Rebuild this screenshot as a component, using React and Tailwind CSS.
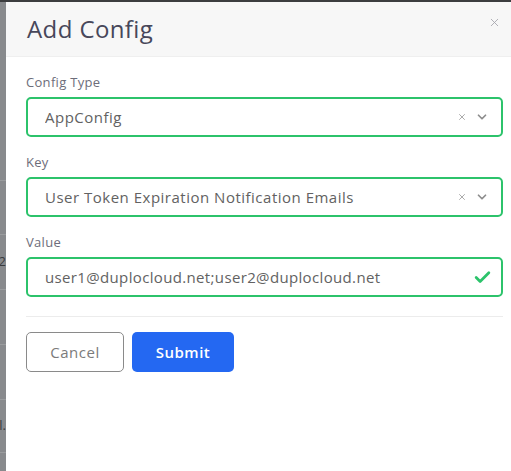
import { X, ChevronDown, Check } from "lucide-react";

function Field({ label, children }) {
  return (
    <div className="flex flex-col">
      <label className="text-[13px] leading-[20px] mb-[5px] text-[#6d6d7a] tracking-[0.3px]">{label}</label>
      {children}
    </div>
  );
}

function SelectBox({ value }) {
  return (
    <div className="h-[40px] flex items-center border-2 border-[#2cc36b] rounded-[5px] pl-[17px] pr-[12px]">
      <span className="flex-1 text-[15px] text-[#626262] tracking-[0.5px] truncate">{value}</span>
      <X size={10} strokeWidth={2} className="text-[#9a9a9a] mr-[8px]" />
      <ChevronDown size={14} strokeWidth={3} className="text-[#8d8d8d]" />
    </div>
  );
}

export default function App() {
  return (
    <div className="w-[511px] h-[471px] flex flex-col bg-white overflow-hidden" style={{ fontFamily: "'Open Sans', 'Noto Sans', sans-serif" }}>
      <div className="h-[2px] bg-[#3c3d3f]" />
      <div className="flex flex-1">
        {/* dimmed page behind the modal */}
        <div className="w-[6px] bg-[#888a8d] flex flex-col overflow-hidden text-[13px] text-[#3a3b3d]">
          <div className="h-[179px] border-b border-[#9a9c9e]" />
          <div className="h-[54px] border-b border-[#9a9c9e]" />
          <div className="h-[55px] border-b border-[#9a9c9e] flex items-center justify-end -ml-[10px]"><span>o2</span></div>
          <div className="h-[55px] border-b border-[#9a9c9e]" />
          <div className="h-[55px] border-b border-[#9a9c9e]" />
          <div className="h-[53px] border-b border-[#9a9c9e] flex items-center justify-end -ml-[10px]"><span>l.</span></div>
        </div>
        <div className="flex-1 flex flex-col bg-white">
          <div className="h-[55px] bg-[#f7f7f7] flex items-center justify-between pl-[21px] pr-[10px] border-b border-[#efefef]">
            <h2 className="text-[24px] text-[#47475a] tracking-[0.4px]">Add Config</h2>
            <X size={13} strokeWidth={1.6} className="text-[#a5a5ad] -mt-[14px]" />
          </div>
          <div className="flex flex-col pl-[20px] pr-[8px] pt-[15px]">
            <div className="flex flex-col gap-[15px]">
              <Field label="Config Type">
                <SelectBox value="AppConfig" />
              </Field>
              <Field label="Key">
                <SelectBox value="User Token Expiration Notification Emails" />
              </Field>
              <Field label="Value">
                <div className="h-[40px] flex items-center border-2 border-[#2cc36b] rounded-[5px] pl-[17px] pr-[9px]">
                  <span className="flex-1 text-[15px] text-[#626262] tracking-[0.35px]">user1@duplocloud.net;user2@duplocloud.net</span>
                  <Check size={19} strokeWidth={3.5} className="text-[#2cc36b]" />
                </div>
              </Field>
            </div>
            <div className="h-px bg-[#ececec] mt-[19px]" />
            <div className="flex gap-[8px] mt-[15px]">
              <button className="w-[98px] h-[40px] border border-[#8a8a8a] rounded-[5px] text-[15px] text-[#7b7b7b] tracking-[0.5px]">Cancel</button>
              <button className="w-[102px] h-[40px] bg-[#2468f2] rounded-[5px] text-[15px] font-semibold text-white tracking-[0.5px]">Submit</button>
            </div>
          </div>
        </div>
      </div>
    </div>
  );
}
